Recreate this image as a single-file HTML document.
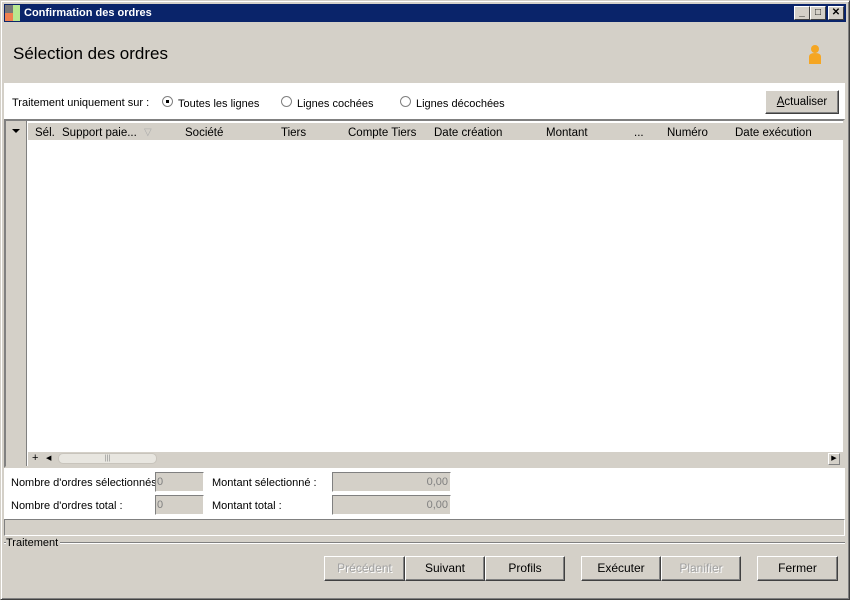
<!DOCTYPE html>
<html><head><meta charset="utf-8"><style>
*{box-sizing:border-box;margin:0;padding:0}
body{width:850px;height:600px;background:#d4d0c8;font-family:"Liberation Sans",Arial,sans-serif;font-size:11px;color:#000;position:relative;overflow:hidden}
.a{position:absolute}
.win{left:0;top:0;width:850px;height:600px;border:1px solid;border-color:#d4d0c8 #404040 #404040 #d4d0c8;box-shadow:inset 1px 1px #fff,inset -1px -1px #808080}
.tb{left:4px;top:4px;width:842px;height:18px;background:#0a246a;color:#fff;font-weight:bold;font-size:11px;line-height:19px;padding-left:20px}
.cb{top:6px;width:16px;height:14px;background:#d4d0c8;border:1px solid;border-color:#fff #404040 #404040 #fff;color:#000;font-size:10px;text-align:center;line-height:12px;font-weight:bold}
.btn{height:25px;background:#d4d0c8;border:1px solid;border-color:#fff #404040 #404040 #fff;box-shadow:inset -1px -1px #808080;text-align:center;line-height:23px;font-size:12px}
.dis{color:#a0a0a0;text-shadow:1px 1px #fff}
.hd{top:127px;font-size:11.5px}
.rad{width:11px;height:11px;border-radius:50%;background:#fff;border:1px solid #808080;top:96px}
.fld{background:#d4d0c8;border:1px solid;border-color:#808080 #fff #fff #808080;height:20px;color:#808080;font-size:11px;line-height:18px}
</style></head><body>
<div class="a win"></div>
<div class="a tb">Confirmation des ordres</div>
<div class="a" style="left:5px;top:5px;width:8px;height:8px;background:#777"></div>
<div class="a" style="left:5px;top:13px;width:8px;height:8px;background:#f08050"></div>
<div class="a" style="left:13px;top:5px;width:7px;height:16px;background:#b8e890"></div>
<div class="a cb" style="left:794px">_</div>
<div class="a cb" style="left:810px">□</div>
<div class="a cb" style="left:828px">✕</div>
<div class="a" style="left:13px;top:44px;font-size:17px">Sélection des ordres</div>
<svg class="a" style="left:806px;top:43px" width="18" height="22"><circle cx="9" cy="6" r="4" fill="#f5a623"/><path d="M3 21 V14 Q3 10 9 10 Q15 10 15 14 V21Z" fill="#f5a623"/></svg>
<div class="a" style="left:4px;top:83px;width:841px;height:36px;background:#fff"></div>
<div class="a" style="left:12px;top:97px">Traitement uniquement sur :</div>
<div class="a rad" style="left:162px"><div class="a" style="left:3px;top:3px;width:3px;height:3px;background:#000"></div></div>
<div class="a" style="left:178px;top:98px">Toutes les lignes</div>
<div class="a rad" style="left:281px"></div><div class="a" style="left:297px;top:98px">Lignes cochées</div>
<div class="a rad" style="left:400px"></div><div class="a" style="left:416px;top:98px">Lignes décochées</div>
<div class="a btn" style="left:765px;top:90px;width:74px;height:24px;font-size:11.5px;line-height:22px"><u>A</u>ctualiser</div>
<div class="a" style="left:4px;top:119px;width:841px;height:349px;background:#fff;border:2px solid;border-color:#808080 #d4d0c8 #d4d0c8 #808080"></div>
<div class="a" style="left:6px;top:121px;width:21px;height:345px;background:#d4d0c8;border-right:1px solid #808080"></div>
<div class="a" style="left:12px;top:129px;border:4px solid transparent;border-top:4px solid #000"></div>
<div class="a" style="left:28px;top:123px;width:815px;height:17px;background:#d4d0c8"></div>
<div class="a hd" style="left:35px">Sél.</div>
<div class="a hd" style="left:62px">Support paie...</div>
<div class="a" style="left:144px;top:127px;color:#aaa;font-size:10px">▽</div>
<div class="a hd" style="left:185px">Société</div>
<div class="a hd" style="left:281px">Tiers</div>
<div class="a hd" style="left:348px">Compte Tiers</div>
<div class="a hd" style="left:434px">Date création</div>
<div class="a hd" style="left:546px">Montant</div>
<div class="a hd" style="left:634px">...</div>
<div class="a hd" style="left:667px">Numéro</div>
<div class="a hd" style="left:735px">Date exécution</div>
<div class="a" style="left:28px;top:452px;width:815px;height:14px;background:#d4d0c8"></div>
<div class="a" style="left:32px;top:452px;font-size:11px">+</div>
<div class="a" style="left:46px;top:453px;width:10px;height:12px;font-size:7px;line-height:12px">◀</div>
<div class="a" style="left:58px;top:453px;width:99px;height:11px;background:#e8e6e0;border-radius:5px;border:1px solid #c8c4bc;text-align:center;font-size:7px;line-height:9px;color:#888">|||</div>
<div class="a" style="left:828px;top:453px;width:12px;height:12px;background:#d4d0c8;border:1px solid;border-color:#fff #808080 #808080 #fff;font-size:7px;line-height:10px;text-align:center">▶</div>
<div class="a" style="left:4px;top:468px;width:841px;height:51px;background:#fff"></div>
<div class="a" style="left:11px;top:477px">Nombre d'ordres sélectionnés</div>
<div class="a" style="left:11px;top:500px">Nombre d'ordres total :</div>
<div class="a fld" style="left:155px;top:472px;width:49px;padding-left:1px">0</div>
<div class="a fld" style="left:155px;top:495px;width:49px;padding-left:1px">0</div>
<div class="a" style="left:212px;top:477px">Montant sélectionné :</div>
<div class="a" style="left:212px;top:500px">Montant total :</div>
<div class="a fld" style="left:332px;top:472px;width:119px;text-align:right;padding-right:2px">0,00</div>
<div class="a fld" style="left:332px;top:495px;width:119px;text-align:right;padding-right:2px">0,00</div>
<div class="a" style="left:4px;top:519px;width:841px;height:17px;border:1px solid;border-color:#808080 #fff #fff #808080"></div>
<div class="a" style="left:4px;top:542px;width:841px;height:2px;border-top:1px solid #808080;border-bottom:1px solid #fff"></div>
<div class="a" style="left:6px;top:537px;background:#d4d0c8;padding-right:2px">Traitement</div>
<div class="a btn dis" style="left:324px;top:556px;width:81px">Précédent</div>
<div class="a btn" style="left:405px;top:556px;width:80px">Suivant</div>
<div class="a btn" style="left:485px;top:556px;width:80px">Profils</div>
<div class="a btn" style="left:581px;top:556px;width:80px">Exécuter</div>
<div class="a btn dis" style="left:661px;top:556px;width:80px">Planifier</div>
<div class="a btn" style="left:757px;top:556px;width:81px">Fermer</div>
</body></html>
